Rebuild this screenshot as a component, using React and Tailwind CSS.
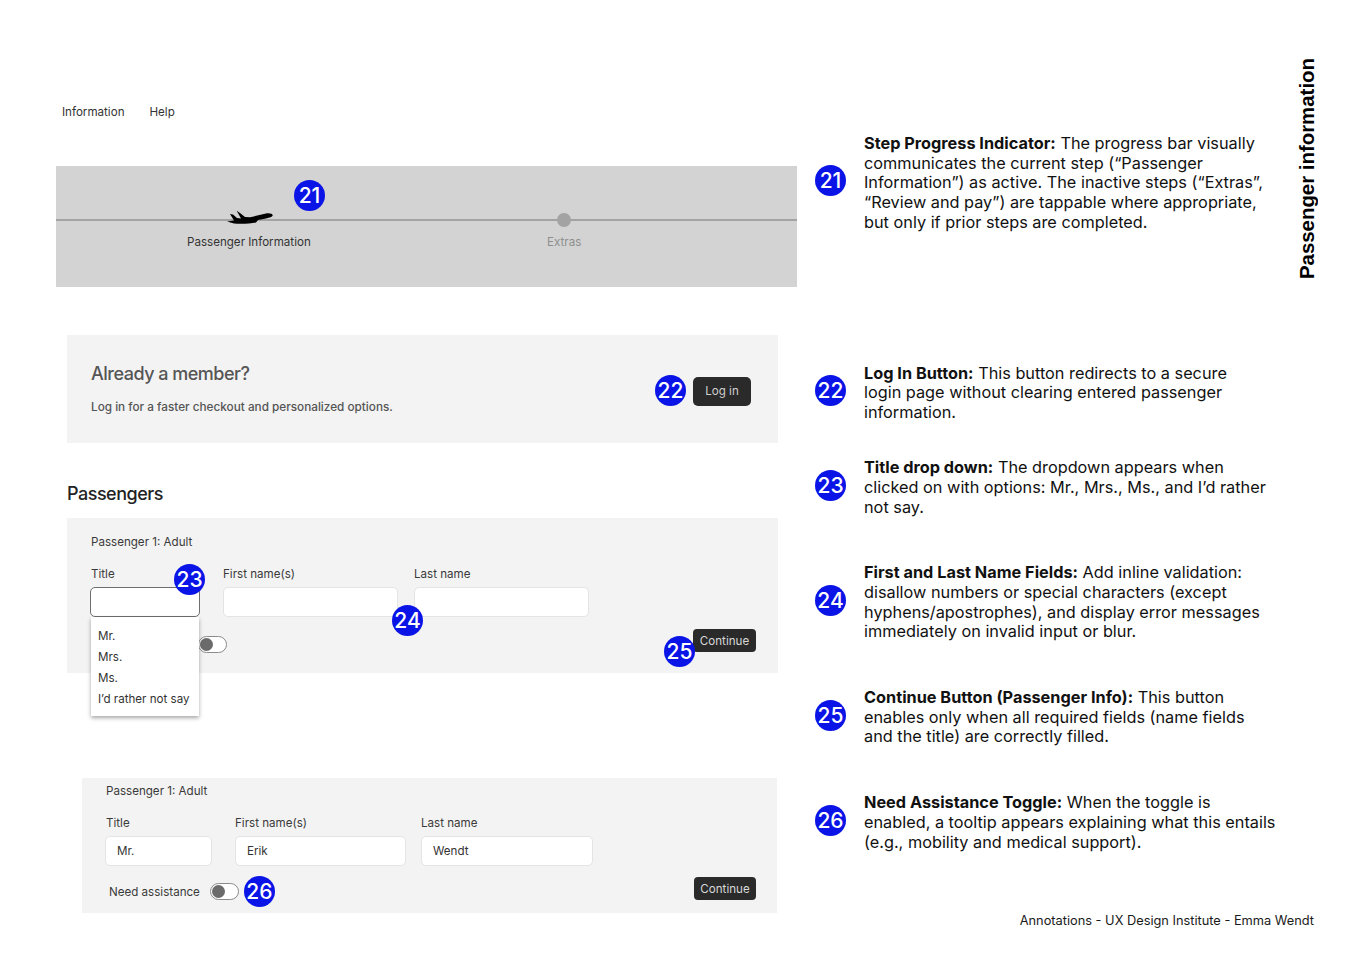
import React from 'react';

const annotations = [
  {
    n: 21,
    title: 'Step Progress Indicator:',
    lines: [
      ' The progress bar visually',
      'communicates the current step (“Passenger',
      'Information”) as active. The inactive steps (“Extras”,',
      '“Review and pay”) are tappable where appropriate,',
      'but only if prior steps are completed.',
    ],
  },
  {
    n: 22,
    title: 'Log In Button:',
    lines: [' This button redirects to a secure', 'login page without clearing entered passenger', 'information.'],
  },
  {
    n: 23,
    title: 'Title drop down:',
    lines: [' The dropdown appears when', 'clicked on with options: Mr., Mrs., Ms., and I’d rather', 'not say.'],
  },
  {
    n: 24,
    title: 'First and Last Name Fields:',
    lines: [
      ' Add inline validation:',
      'disallow numbers or special characters (except',
      'hyphens/apostrophes), and display error messages',
      'immediately on invalid input or blur.',
    ],
  },
  {
    n: 25,
    title: 'Continue Button (Passenger Info):',
    lines: [' This button', 'enables only when all required fields (name fields', 'and the title) are correctly filled.'],
  },
  {
    n: 26,
    title: 'Need Assistance Toggle:',
    lines: [' When the toggle is', 'enabled, a tooltip appears explaining what this entails', '(e.g., mobility and medical support).'],
  },
];

const Badge = ({ n, className = '' }) => (
  <div className={`w-[31px] h-[31px] rounded-full bg-[#0a14e6] text-white flex items-center justify-center text-[21px] font-medium leading-none shrink-0 ${className}`}>
    {n}
  </div>
);

const Toggle = () => (
  <div className="w-[29px] h-[17px] rounded-full border border-[#8a8a8a] bg-white flex items-center pl-[1px]">
    <div className="w-[13px] h-[13px] rounded-full bg-[#6b6b6b]" />
  </div>
);

const Field = ({ label, value, width, focused }) => (
  <div className={`flex flex-col ${width}`}>
    <label className="text-[11.6px] leading-[15px] text-[#3a3a3a] mb-[5px]">{label}</label>
    <div className={`h-[30px] rounded-[5px] bg-white flex items-center pl-[11px] pt-[2px] text-[11.6px] text-[#333] border ${focused ? 'border-[#6f6f6f] ml-[-1px]' : 'border-[#e4e4e4]'}`}>
      {value}
    </div>
  </div>
);

const Plane = () => (
  <svg width="48" height="16" viewBox="0 0 48 16" className="absolute left-[170px] top-[43px]">
    <path fill="#000" d="M10.7 1.7 L14 4 L19 8 L24 8.3 L40 4.5 C44 4 47 5 46.7 6.5 C46 8 44 8.6 40 9.5 L32 11 L30 13.5 C24 14.8 14 15 8 14.5 L1 12.5 L8 11.5 L4 5 L7 5.5 L11 9 L15 9.5 Z" />
  </svg>
);

export default function App() {
  return (
    <div className="relative w-[1371px] h-[968px] bg-white flex font-['Inter',sans-serif] overflow-hidden">
      {/* left side: screens */}
      <div className="w-[797px] ml-[56px] shrink-0 flex flex-col">
        <nav className="flex gap-[25px] mt-[105px] ml-[6px] text-[11.6px] leading-[15px] text-[#333]">
          <span>Information</span>
          <span>Help</span>
        </nav>

        <section className="relative mt-[46px] w-[741px] h-[121px] bg-[#d3d3d3]">
          <div className="absolute left-0 right-0 top-[53px] h-[2px] bg-[#a3a3a3]" />
          <Plane />
          <Badge n={21} className="absolute left-[238px] top-[14px]" />
          <div className="absolute left-[501px] top-[47px] w-[14px] h-[14px] rounded-full bg-[#a3a3a3]" />
          <span className="absolute left-[131px] top-[69px] text-[11.6px] leading-[15px] text-[#333]">Passenger Information</span>
          <span className="absolute left-[491px] top-[69px] text-[11.6px] leading-[15px] text-[#8f8f8f]">Extras</span>
        </section>

        <section className="ml-[11px] mt-[48px] w-[711px] h-[108px] bg-[#f3f3f3] pl-[24px] pr-[27px] flex items-center justify-between">
          <div>
            <h2 className="text-[18px] leading-[22px] font-medium tracking-[-0.5px] text-[#555]">Already a member?</h2>
            <p className="mt-[15px] text-[11.75px] leading-[15px] font-medium text-[#555]">Log in for a faster checkout and personalized options.</p>
          </div>
          <div className="flex items-center gap-[7px]">
            <Badge n={22} className="mt-[2px]" />
            <button className="mt-[5px] w-[58px] h-[29px] rounded-[5px] bg-[#2a2a2a] text-[#cfcfcf] text-[11.6px]">Log in</button>
          </div>
        </section>

        <h2 className="ml-[11px] mt-[40px] text-[18px] leading-[22px] font-medium tracking-[-0.5px] text-[#222]">Passengers</h2>

        <section className="relative ml-[11px] mt-[13px] w-[711px] h-[155px] bg-[#f3f3f3] pl-[24px] pt-[17px]">
          <p className="text-[11.6px] leading-[15px] text-[#3a3a3a]">Passenger 1: Adult</p>
          <div className="flex mt-[17px] gap-[16px]">
            <Field label="Title" width="w-[109px] mr-[7px]" focused />
            <Field label="First name(s)" width="w-[175px]" />
            <Field label="Last name" width="w-[175px]" />
          </div>
          <div className="absolute left-[131px] top-[118px]">
            <Toggle />
          </div>
          <Badge n={23} className="absolute left-[107px] top-[46px]" />
          <Badge n={24} className="absolute left-[325px] top-[87px]" />
          <div className="absolute left-[24px] top-[99px] w-[108px] h-[99px] bg-white shadow-[0_2px_4px_rgba(0,0,0,0.35)] pt-[9px] pl-[7px] text-[11.6px] leading-[21px] text-[#333]">
            <p>Mr.</p>
            <p>Mrs.</p>
            <p>Ms.</p>
            <p>I’d rather not say</p>
          </div>
          <button className="absolute left-[626px] top-[111px] w-[63px] h-[23px] rounded-[4px] bg-[#2a2a2a] pt-[2px] text-[#d8d8d8] text-[11.6px]">Continue</button>
          <Badge n={25} className="absolute left-[597px] top-[118px]" />
        </section>

        <section className="relative ml-[26px] mt-[105px] w-[695px] h-[135px] bg-[#f3f3f3] pl-[24px] pt-[6px]">
          <p className="text-[11.6px] leading-[15px] text-[#3a3a3a]">Passenger 1: Adult</p>
          <div className="flex mt-[17px] ml-[-1px] gap-[15px]">
            <Field label="Title" value="Mr." width="w-[107px] mr-[8px] [&>label]:ml-[1px]" />
            <Field label="First name(s)" value="Erik" width="w-[171px]" />
            <Field label="Last name" value="Wendt" width="w-[172px]" />
          </div>
          <div className="flex items-center mt-[10px] ml-[3px]">
            <span className="text-[11.6px] leading-[15px] text-[#3a3a3a] mr-[10px] pt-[2px]">Need assistance</span>
            <Toggle />
            <Badge n={26} className="ml-[5px]" />
          </div>
          <button className="absolute left-[612px] top-[99px] w-[62px] h-[23px] rounded-[4px] bg-[#2a2a2a] pt-[2px] text-[#d8d8d8] text-[11.6px]">Continue</button>
        </section>
      </div>

      {/* right side: annotations */}
      <div className="flex flex-col gap-[46px] pt-[134px] ml-[-38px] w-[470px]">
        {annotations.map((a, i) => (
          <div key={a.n} className={`flex items-center gap-[18px] ${i === 0 ? 'mb-[85px]' : ''} ${i === 1 ? 'mb-[-10.5px]' : ''}`}>
            <Badge n={a.n} className="mt-[-5px]" />
            <p className="text-[16.3px] leading-[19.7px] text-[#111] whitespace-nowrap">
              <span className="font-bold">{a.title}</span>
              {a.lines.map((line, j) => (
                <React.Fragment key={j}>
                  {j > 0 && <br />}
                  {line}
                </React.Fragment>
              ))}
            </p>
          </div>
        ))}
      </div>

      <h1 className="absolute left-[1296px] top-[58px] h-[221px] [writing-mode:vertical-rl] rotate-180 font-['Liberation_Sans',sans-serif] font-bold text-[20.4px] leading-[22px] text-black whitespace-nowrap">
        Passenger information
      </h1>
      <p className="absolute right-[57px] top-[912px] text-[12.8px] leading-[17px] text-[#1a1a1a]">Annotations - UX Design Institute - Emma Wendt</p>
    </div>
  );
}
